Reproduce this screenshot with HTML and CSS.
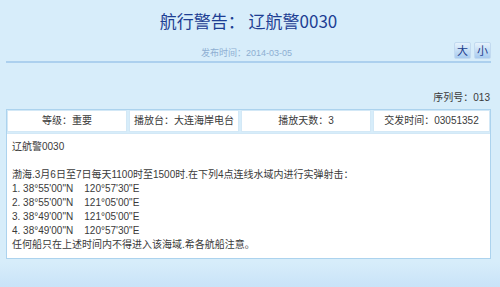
FILE: index.html
```html
<!DOCTYPE html>
<html lang="zh-CN">
<head>
    <meta charset="UTF-8">
    <title>航行警告</title>
    <link rel="stylesheet" href="styles.css">
</head>
<body>
    <div class="page">
        <h1 class="title">航行警告： 辽航警0030</h1>
        <div class="meta">
            <span class="date">发布时间：2014-03-05</span>
            <div class="sizer">
                <button class="size-btn">大</button>
                <button class="size-btn">小</button>
            </div>
        </div>
        <div class="serial">序列号：013</div>
        <div class="notice">
            <div class="info">
                <div class="cell">等级：重要</div>
                <div class="cell">播放台：大连海岸电台</div>
                <div class="cell">播放天数：3</div>
                <div class="cell">交发时间：03051352</div>
            </div>
            <div class="body-text">
                辽航警0030<br><br>
                渤海.3月6日至7日每天1100时至1500时.在下列4点连线水域内进行实弹射击：<br>
                1. 38°55'00"N &nbsp;&nbsp; 120°57'30"E<br>
                2. 38°55'00"N &nbsp;&nbsp; 121°05'00"E<br>
                3. 38°49'00"N &nbsp;&nbsp; 121°05'00"E<br>
                4. 38°49'00"N &nbsp;&nbsp; 120°57'30"E<br>
                任何船只在上述时间内不得进入该海域.希各航船注意。
            </div>
        </div>
    </div>
</body>
</html>
```

FILE: styles.css
```css
* {
    box-sizing: border-box;
}

html, body {
    height: 100%;
}

body {
    margin: 0;
    background: linear-gradient(#d7edfa 0, #d7edfa 262px, #c9e3f8 287px);
    font: 10px/14px "Liberation Sans", "Noto Sans CJK SC", sans-serif;
    color: #3a3a3a;
}

.page {
    width: 485px;
    margin-left: 6px;
    padding-top: 9px;
}

.title {
    margin: 0;
    font: 17px/24px "Noto Sans CJK SC", sans-serif;
    color: #1d3e93;
    text-align: center;
}

.meta {
    position: relative;
    height: 22px;
    margin-top: 8px;
    border-bottom: 2px solid #acd0ee;
    text-align: center;
}

.date {
    display: inline-block;
    padding-top: 7px;
    margin-left: -4px;
    font-size: 9px;
    line-height: 11px;
    color: #8eafd2;
}

/* font size buttons sit over the right end of the line */
.sizer {
    position: absolute;
    right: 0;
    top: 1px;
    display: flex;
    gap: 3px;
}

.size-btn {
    width: 17px;
    height: 17px;
    padding: 0;
    border: 1px solid #c2daf0;
    border-radius: 2px;
    background: linear-gradient(#e6f2fc, #a7cbef);
    font: 11px/15px "Noto Sans CJK SC", sans-serif;
    color: #1c3d8c;
}

.serial {
    margin-top: 27px;
    text-align: right;
    line-height: 16px;
    padding-right: 1px;
}

.notice {
    margin-top: 3px;
    border: 1px solid #acd3ee;
    background: #fff;
}

.info {
    display: grid;
    grid-template-columns: 120px 110px 130px 1fr;
    gap: 2px;
    background: #d7edfa;
    padding-bottom: 1px;
}

.cell {
    height: 22px;
    background: #fff;
    border: 1px solid #d3e8f6;
    line-height: 20px;
    text-align: center;
}

.body-text {
    padding: 6px 5px 6px 5px;
    border-top: 1px solid #d3e8f6;
}
```
